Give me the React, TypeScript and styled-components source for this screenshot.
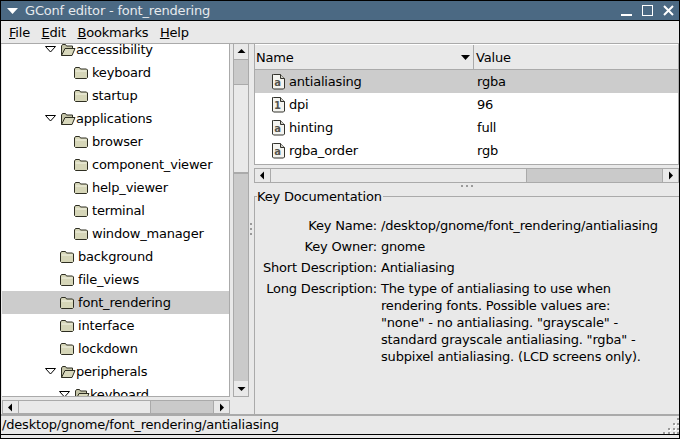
import React from "react";
import styled, { createGlobalStyle } from "styled-components";

const GlobalStyle = createGlobalStyle`
  html, body { margin: 0; padding: 0; background: #e9e9e9; }
  body { font-family: "DejaVu Sans", sans-serif; font-size: 13px; letter-spacing: -0.19px; color: #000; }
`;

const treeRows = [
  { name: "accessibility", level: 1, open: true },
  { name: "keyboard", level: 2 },
  { name: "startup", level: 2 },
  { name: "applications", level: 1, open: true },
  { name: "browser", level: 2 },
  { name: "component_viewer", level: 2 },
  { name: "help_viewer", level: 2 },
  { name: "terminal", level: 2 },
  { name: "window_manager", level: 2 },
  { name: "background", level: 1 },
  { name: "file_views", level: 1 },
  { name: "font_rendering", level: 1, selected: true },
  { name: "interface", level: 1 },
  { name: "lockdown", level: 1 },
  { name: "peripherals", level: 1, open: true },
  { name: "keyboard", level: 2, open: true },
];

const keys = [
  { name: "antialiasing", value: "rgba", glyph: "a", selected: true },
  { name: "dpi", value: "96", glyph: "1" },
  { name: "hinting", value: "full", glyph: "a" },
  { name: "rgba_order", value: "rgb", glyph: "a" },
];

const gripDots = [
  [14, 0],
  [10, 5],
  [14, 5],
  [5, 10],
  [10, 10],
  [14, 10],
  [0, 14],
  [5, 14],
  [10, 14],
  [14, 14],
];

const FolderIcon = ({ open }: { open?: boolean }) => (
  <svg width="16" height="14" viewBox="0 0 16 14">
    {open ? (
      <>
        <path d="M1.5 12.5V3l1-1.5h3l1 1.5h6v2" fill="#c5c5a8" stroke="#2e2e22" />
        <path d="M1.5 12.5L5 5.5h10l-3 7z" fill="#d8d8bc" stroke="#2e2e22" />
      </>
    ) : (
      <>
        <path d="M0.5 3l1-1.5h4l1 1.5h6l1 1v7.5l-1 1h-11l-1-1z" fill="#d6d6b8" stroke="#2e2e22" />
        <path d="M1.5 5h11" stroke="#f3f3e4" />
      </>
    )}
  </svg>
);

const DocIcon = ({ glyph }: { glyph: string }) => (
  <svg width="14" height="16" viewBox="0 0 14 16">
    <path d="M2.5 0.5h7l4 4v9.5l-1 1h-10l-1-1v-13.5z" fill="#f4f4f0" stroke="#33332d" />
    <path d="M9.5 0.5v4h4" fill="#cfcfc8" stroke="#33332d" />
    <text x="6.5" y="12" fontSize="10" fontWeight="bold" fontFamily="DejaVu Sans" textAnchor="middle" fill="#55554e">
      {glyph}
    </text>
  </svg>
);

const Arrow = ({ dir }: { dir: "up" | "down" | "left" | "right" }) => {
  const points = {
    up: "0.5,6 4.5,2 8.5,6",
    down: "0.5,3 8.5,3 4.5,7",
    left: "6,0.5 6,8.5 2,4.5",
    right: "3,0.5 3,8.5 7,4.5",
  };
  return (
    <svg width="9" height="9" viewBox="0 0 9 9">
      <polygon points={points[dir]} fill="#000" />
    </svg>
  );
};

const App = () => {
  return (
    <Frame>
      <GlobalStyle />
      <TitleBar>
        <svg width="11" height="6" viewBox="0 0 11 6">
          <polygon points="0,0 11,0 5.5,6" fill="#fff" />
        </svg>
        <TitleText>GConf editor - font_rendering</TitleText>
        <WindowButtons>
          <svg width="11" height="11" viewBox="0 0 11 11">
            <rect x="0" y="9" width="11" height="2" fill="#fff" />
          </svg>
          <svg width="11" height="11" viewBox="0 0 11 11">
            <rect x="0.5" y="0.5" width="10" height="10" fill="none" stroke="#fff" />
          </svg>
          <svg width="11" height="11" viewBox="0 0 11 11">
            <path d="M1 1l9 9M10 1l-9 9" stroke="#fff" strokeWidth="2" />
          </svg>
        </WindowButtons>
      </TitleBar>
      <MenuBar>
        <MenuItem><u>F</u>ile</MenuItem>
        <MenuItem><u>E</u>dit</MenuItem>
        <MenuItem><u>B</u>ookmarks</MenuItem>
        <MenuItem><u>H</u>elp</MenuItem>
      </MenuBar>
      <Panes>
        <LeftPane>
          <TreeArea>
            <TreeBox>
              <TreeInner>
                {treeRows.map((row, i) => (
                  <TreeRow key={i} $level={row.level} $selected={row.selected}>
                    <Expander>
                      {row.open && (
                        <svg width="11" height="7" viewBox="0 0 11 7">
                          <polygon points="0.5,0.5 10.5,0.5 5.5,6" fill="#fff" stroke="#000" />
                        </svg>
                      )}
                    </Expander>
                    <FolderIcon open={row.open} />
                    <TreeLabel $open={row.open}>{row.name}</TreeLabel>
                  </TreeRow>
                ))}
              </TreeInner>
            </TreeBox>
            <VScroll>
              <ScrollButton $v><Arrow dir="up" /></ScrollButton>
              <VTrack $height={24} />
              <VThumb />
              <VTrack />
              <ScrollButton $v><Arrow dir="down" /></ScrollButton>
            </VScroll>
          </TreeArea>
          <HScroll $width={228} $height={14} $gap={3}>
            <ScrollButton><Arrow dir="left" /></ScrollButton>
            <HThumb $width={131} />
            <HTrack />
            <ScrollButton><Arrow dir="right" /></ScrollButton>
          </HScroll>
        </LeftPane>
        <VGrip>
          <i /><i /><i />
        </VGrip>
        <RightPane>
          <KeyList>
            <ListHead>
              <NameHead>
                Name
                <svg width="9" height="5" viewBox="0 0 9 5">
                  <polygon points="0,0 9,0 4.5,5" fill="#000" />
                </svg>
              </NameHead>
              <ValueHead>Value</ValueHead>
            </ListHead>
            {keys.map((k) => (
              <KeyRow key={k.name} $selected={k.selected}>
                <KeyName>
                  <DocIcon glyph={k.glyph} />
                  {k.name}
                </KeyName>
                <KeyValue>{k.value}</KeyValue>
              </KeyRow>
            ))}
          </KeyList>
          <HScroll $width={425} $height={15} $gap={3}>
            <ScrollButton><Arrow dir="left" /></ScrollButton>
            <HThumb $width={255} />
            <HTrack />
            <ScrollButton><Arrow dir="right" /></ScrollButton>
          </HScroll>
          <HGrip>
            <i /><i /><i />
          </HGrip>
          <DocFrame>
            <DocLegend>Key Documentation</DocLegend>
            <DocGrid>
              <DocLabel>Key Name:</DocLabel>
              <DocValue>/desktop/gnome/font_rendering/antialiasing</DocValue>
              <DocLabel>Key Owner:</DocLabel>
              <DocValue>gnome</DocValue>
              <DocLabel>Short Description:</DocLabel>
              <DocValue>Antialiasing</DocValue>
              <DocLabel>Long Description:</DocLabel>
              <DocValue>
                The type of antialiasing to use when
                <br />
                rendering fonts. Possible values are:
                <br />
                "none" - no antialiasing. "grayscale" -
                <br />
                standard grayscale antialiasing. "rgba" -
                <br />
                subpixel antialiasing. (LCD screens only).
              </DocValue>
            </DocGrid>
          </DocFrame>
        </RightPane>
      </Panes>
      <StatusBar>
        /desktop/gnome/font_rendering/antialiasing
        <ResizeGrip width="16" height="16" viewBox="0 0 16 16">
          {gripDots.map(([x, y]) => (
            <g key={`${x}-${y}`}>
              <rect x={x + 1} y={y + 1} width="2" height="2" fill="#fff" />
              <rect x={x} y={y} width="2" height="2" fill="#9a9a9a" />
            </g>
          ))}
        </ResizeGrip>
      </StatusBar>
      <BottomEdge />
    </Frame>
  );
};

export default App;

const Frame = styled.div`
  width: 680px;
  height: 439px;
  box-sizing: border-box;
  display: flex;
  flex-direction: column;
  overflow: hidden;
  background: #e9e9e9;
  border: 1px solid #000;
`;

const TitleBar = styled.div`
  flex: none;
  height: 20px;
  box-sizing: border-box;
  display: flex;
  align-items: center;
  padding: 0 5px 0 6px;
  background: #4b6983;
  border-bottom: 1px solid #000;
`;

const TitleText = styled.span`
  margin-left: 7px;
  color: #e6eaee;
`;

const WindowButtons = styled.div`
  margin-left: auto;
  display: flex;
  gap: 10px;
  svg {
    display: block;
  }
`;

const MenuBar = styled.div`
  flex: none;
  height: 23px;
  box-sizing: border-box;
  display: flex;
  align-items: center;
  padding: 1px 0 0 8px;
  gap: 11.5px;
  border-bottom: 1px solid #aaa;
`;

const MenuItem = styled.span`
  line-height: 16px;
`;

const Panes = styled.div`
  flex: 1;
  min-height: 0;
  display: flex;
`;

const LeftPane = styled.div`
  flex: none;
  width: 248px;
  box-sizing: border-box;
  display: flex;
  flex-direction: column;
  padding-left: 1px;
`;

const TreeArea = styled.div`
  flex: 1;
  min-height: 0;
  display: flex;
`;

const TreeBox = styled.div`
  flex: none;
  width: 228px;
  box-sizing: border-box;
  background: #fff;
  border-right: 1px solid #aaa;
  border-bottom: 1px solid #aaa;
  overflow: hidden;
`;

const TreeInner = styled.div`
  margin-top: -6px;
`;

const TreeRow = styled.div<{ $level: number; $selected?: boolean }>`
  height: 23px;
  display: flex;
  align-items: center;
  padding-left: ${(p) => (p.$level === 1 ? 42 : 56)}px;
  background: ${(p) => (p.$selected ? "#cccccc" : "transparent")};
  white-space: nowrap;
`;

const Expander = styled.span`
  flex: none;
  width: 15px;
  margin-left: 1px;
  display: flex;
  align-items: center;
`;

const TreeLabel = styled.span<{ $open?: boolean }>`
  margin-left: ${(p) => (p.$open ? 0 : 2)}px;
`;

const VScroll = styled.div`
  flex: none;
  width: 16px;
  margin-left: 3px;
  display: flex;
  flex-direction: column;
  box-sizing: border-box;
  border: 1px solid #aaa;
  border-top: none;
  background: #cacaca;
`;

const ScrollButton = styled.div<{ $v?: boolean }>`
  flex: none;
  width: ${(p) => (p.$v ? "14px" : "15px")};
  height: ${(p) => (p.$v ? "15px" : "auto")};
  display: flex;
  align-items: center;
  justify-content: center;
  background: #e9e9e9;
`;

const VThumb = styled.div`
  flex: none;
  height: 87px;
  background: #e9e9e9;
  border-top: 1px solid #aaa;
  border-bottom: 1px solid #aaa;
`;

const VTrack = styled.div<{ $height?: number }>`
  flex: ${(p) => (p.$height ? `none` : 1)};
  height: ${(p) => (p.$height ? `${p.$height}px` : "auto")};
  background: #cacaca;
  border-top: 1px solid #aaa;
`;

const HScroll = styled.div<{ $width: number; $height: number; $gap: number }>`
  flex: none;
  width: ${(p) => p.$width}px;
  height: ${(p) => p.$height}px;
  box-sizing: border-box;
  margin-top: ${(p) => p.$gap}px;
  display: flex;
  border: 1px solid #aaa;
`;

const HThumb = styled.div<{ $width: number }>`
  flex: none;
  width: ${(p) => p.$width}px;
  background: #e9e9e9;
  border-left: 1px solid #aaa;
`;

const HTrack = styled.div`
  flex: 1;
  background: #cacaca;
  border-left: 1px solid #aaa;
  border-right: 1px solid #aaa;
`;

const VGrip = styled.div`
  flex: none;
  width: 5px;
  display: flex;
  flex-direction: column;
  justify-content: center;
  gap: 3px;
  padding-left: 1px;
  box-sizing: border-box;
  i {
    display: block;
    width: 2px;
    height: 2px;
    background: #9a9a9a;
  }
`;

const RightPane = styled.div`
  flex: 1;
  min-width: 0;
  display: flex;
  flex-direction: column;
`;

const KeyList = styled.div`
  flex: none;
  height: 121px;
  box-sizing: border-box;
  width: 425px;
  background: #fff;
  border: 1px solid #aaa;
  border-top: none;
`;

const ListHead = styled.div`
  height: 26px;
  box-sizing: border-box;
  display: flex;
  background: #e9e9e9;
  border-top: 1px solid #fff;
  border-bottom: 1px solid #aaa;
`;

const NameHead = styled.div`
  flex: none;
  width: 219px;
  box-sizing: border-box;
  padding: 0 3px 0 1px;
  display: flex;
  align-items: center;
  justify-content: space-between;
  border-right: 1px solid #aaa;
`;

const ValueHead = styled.div`
  flex: 1;
  padding-left: 2px;
  display: flex;
  align-items: center;
`;

const KeyRow = styled.div<{ $selected?: boolean }>`
  height: 23px;
  display: flex;
  align-items: center;
  background: ${(p) => (p.$selected ? "#cccccc" : "transparent")};
`;

const KeyName = styled.div`
  flex: none;
  width: 222px;
  box-sizing: border-box;
  padding-left: 16px;
  display: flex;
  align-items: center;
  gap: 4px;
`;

const KeyValue = styled.div`
  flex: 1;
`;

const HGrip = styled.div`
  flex: none;
  height: 5px;
  display: flex;
  justify-content: center;
  align-items: center;
  gap: 3px;
  i {
    display: block;
    width: 2px;
    height: 2px;
    background: #9a9a9a;
  }
`;

const DocFrame = styled.div`
  flex: 1;
  min-height: 0;
  position: relative;
  width: 425px;
  box-sizing: border-box;
  margin-top: 8px;
  border-top: 1px solid #aaa;
  border-left: 1px solid #aaa;
`;

const DocLegend = styled.span`
  position: absolute;
  top: -8px;
  left: 2px;
  padding-right: 1px;
  background: #e9e9e9;
`;

const DocGrid = styled.div`
  display: grid;
  grid-template-columns: 120px 1fr;
  column-gap: 4px;
  row-gap: 4px;
  padding: 20px 0 0 2px;
`;

const DocLabel = styled.div`
  text-align: right;
  white-space: nowrap;
  line-height: 17px;
`;

const DocValue = styled.div`
  white-space: nowrap;
  line-height: 17px;
`;

const StatusBar = styled.div`
  flex: none;
  height: 20px;
  box-sizing: border-box;
  position: relative;
  padding-left: 1px;
  border-top: 2px solid #aaa;
  line-height: 18px;
  white-space: nowrap;
`;

const ResizeGrip = styled.svg`
  position: absolute;
  right: 0;
  bottom: 0;
`;

const BottomEdge = styled.div`
  flex: none;
  height: 4px;
  box-sizing: border-box;
  border-top: 1px solid #000;
`;
